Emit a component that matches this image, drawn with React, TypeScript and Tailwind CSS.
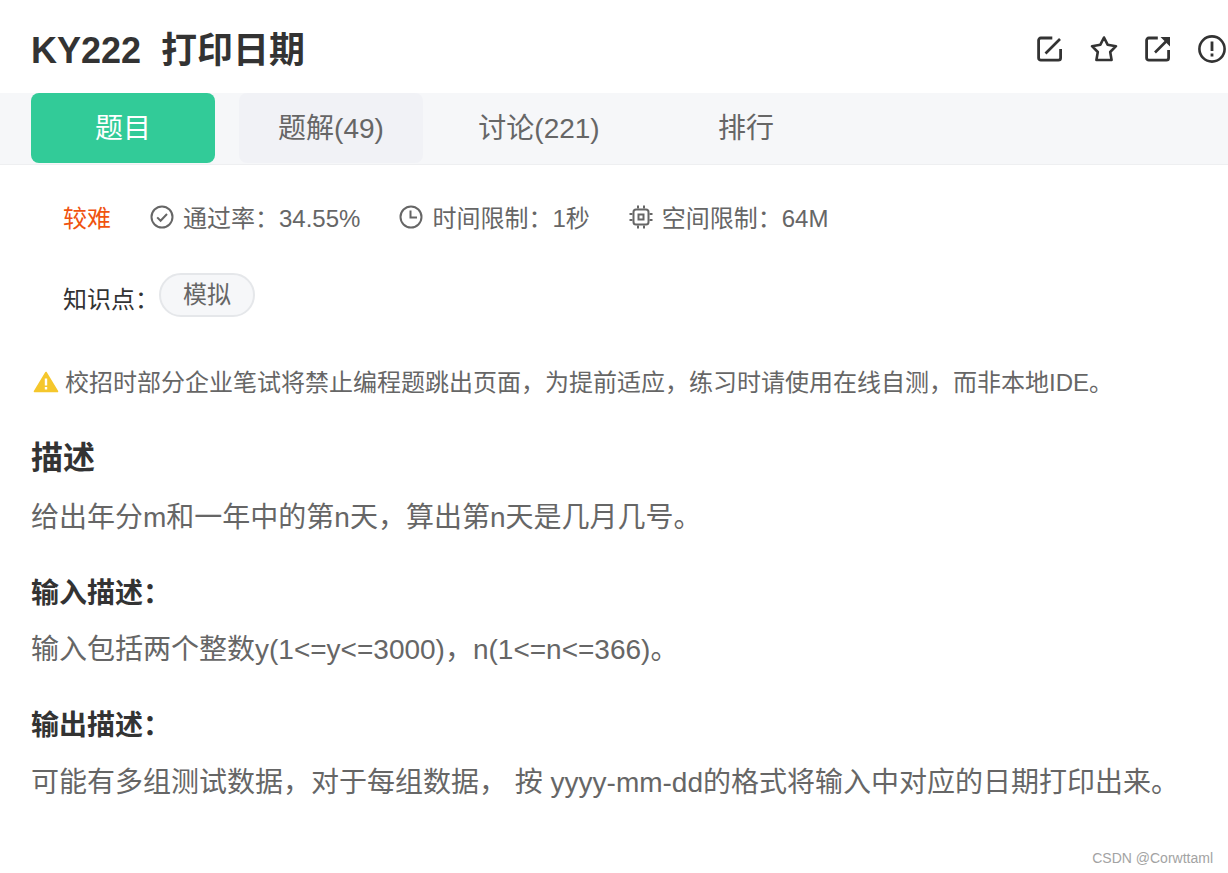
const font = "font-['Liberation_Sans','Noto_Sans_CJK_SC',sans-serif]";

function EditIcon() {
  return (
    <svg width="26" height="26" viewBox="0 0 26 26" fill="none" stroke="#333" strokeWidth="2.8" className="shrink-0">
      <path d="M23.6 13v9a2.2 2.2 0 0 1-2.2 2.2H3.8a2.2 2.2 0 0 1-2.2-2.2V4.2A2.2 2.2 0 0 1 3.8 2h11.5" />
      <path d="M8.5 17.5 23 3" strokeWidth="2.6" />
    </svg>
  );
}

function StarIcon() {
  return (
    <svg width="28" height="28" viewBox="0 0 28 28" fill="none" stroke="#333" strokeWidth="2.6" strokeLinejoin="round" className="shrink-0">
      <path d="M14 2.5 17.6 9.7 26 11.2 20.2 17 21.6 25H6.4L7.8 17 2 11.2 10.4 9.7Z" />
    </svg>
  );
}

function ShareIcon() {
  return (
    <svg width="26" height="26" viewBox="0 0 26 26" fill="none" stroke="#333" strokeWidth="2.8" className="shrink-0">
      <path d="M23.6 14v8a2.2 2.2 0 0 1-2.2 2.2H3.8a2.2 2.2 0 0 1-2.2-2.2V4.2A2.2 2.2 0 0 1 3.8 2h9" />
      <path d="M10 16.5 21 5.5" strokeWidth="2.6" />
      <path d="M15.5 1H25V10.5Z" fill="#333" stroke="none" />
    </svg>
  );
}

function InfoIcon() {
  return (
    <svg width="30" height="30" viewBox="0 0 30 30" fill="none" stroke="#333" strokeWidth="2.6" className="shrink-0">
      <circle cx="15" cy="15" r="12.6" />
      <path d="M15 7.5V17M15 19.5V22.5" strokeWidth="2.8" />
    </svg>
  );
}

function CheckCircle() {
  return (
    <svg width="24" height="24" viewBox="0 0 24 24" fill="none" stroke="#666" strokeWidth="2">
      <circle cx="12" cy="12" r="10.5" />
      <path d="M7.2 12.4 10.6 15.8 17 9" />
    </svg>
  );
}

function ClockIcon() {
  return (
    <svg width="24" height="24" viewBox="0 0 24 24" fill="none" stroke="#666" strokeWidth="2">
      <circle cx="12" cy="12" r="10.5" />
      <path d="M11.5 5.5V12.5H18" />
    </svg>
  );
}

function ChipIcon() {
  return (
    <svg width="24" height="24" viewBox="0 0 24 24" fill="none" stroke="#666" strokeWidth="2">
      <rect x="4.5" y="4.5" width="15" height="15" rx="2.5" />
      <rect x="9.5" y="9.5" width="5" height="5" />
      <path d="M9 0.5v3M15 0.5v3M9 20.5v3M15 20.5v3M0.5 9h3M0.5 15h3M20.5 9h3M20.5 15h3" />
    </svg>
  );
}

function WarnIcon() {
  return (
    <svg width="26" height="24" viewBox="0 0 26 24" className="mb-[3px] shrink-0">
      <path d="M13 2.5 24.5 21.5H1.5Z" fill="#f5c72c" stroke="#f5c72c" strokeWidth="1.6" strokeLinejoin="round" />
      <path d="M13 8.5v7M13 17v2.4" stroke="#fff" strokeWidth="2.4" />
    </svg>
  );
}

export default function App() {
  return (
    <div className={`${font} relative h-[873px] w-[1228px] overflow-hidden bg-white text-[#666]`}>
      <div className="flex h-[93px] items-center justify-between pl-[31px]">
        <h1 className="mt-[8px] text-[36px] leading-none font-bold text-[#333]">KY222&nbsp; 打印日期</h1>
        <div className="mt-[5px] flex w-[191px] shrink-0 items-center">
          <EditIcon />
          <span className="ml-[27px]"><StarIcon /></span>
          <span className="ml-[27px]"><ShareIcon /></span>
          <span className="ml-[26px]"><InfoIcon /></span>
        </div>
      </div>

      <div className="flex h-[72px] border-b border-[#eeeff1] bg-[#f6f7f9] pl-[31px] text-[28px]">
        <div className="flex h-[70px] w-[184px] items-center justify-center rounded-[8px] bg-[#32cb98] pt-[1px] text-white">题目</div>
        <div className="ml-[24px] flex h-[70px] w-[184px] items-center justify-center rounded-[8px] bg-[#f1f2f6] pt-[1px]">题解(49)</div>
        <div className="flex h-[70px] w-[232px] items-center justify-center pt-[1px]">讨论(221)</div>
        <div className="flex h-[70px] w-[182px] items-center justify-center pt-[1px]">排行</div>
      </div>

      <div className="flex h-[54px] items-center pl-[63px] pt-[54px] text-[24px]">
        <span className="text-[#f0530f]">较难</span>
        <span className="mb-[5px] ml-[39px]"><CheckCircle /></span>
        <span className="ml-[9px]">通过率：34.55%</span>
        <span className="mb-[5px] ml-[39px]"><ClockIcon /></span>
        <span className="ml-[9px]">时间限制：1秒</span>
        <span className="mb-[5px] ml-[39px]"><ChipIcon /></span>
        <span className="ml-[9px]">空间限制：64M</span>
      </div>

      <div className="mt-[54px] flex h-[44px] items-start pl-[63px] text-[24px] text-[#333]">
        <span className="mt-[9px]">知识点：</span>
        <span className="flex h-[44px] w-[96px] items-center justify-center rounded-full border-2 border-[#e5e7ea] bg-[#f6f7f9] text-[#666]">模拟</span>
      </div>

      <div className="mt-[48px] flex items-center gap-[6px] pl-[33px] text-[24px]">
        <WarnIcon />
        <span className="whitespace-nowrap">校招时部分企业笔试将禁止编程题跳出页面，为提前适应，练习时请使用在线自测，而非本地IDE。</span>
      </div>

      <div className="pl-[31px]">
        <h2 className="mt-[35px] text-[32px] leading-[44px] font-bold text-[#333]">描述</h2>
        <p className="mt-[18px] text-[28px] leading-[40px]">给出年分m和一年中的第n天，算出第n天是几月几号。</p>
        <h3 className="mt-[36px] text-[28px] leading-[40px] font-bold text-[#333]">输入描述：</h3>
        <p className="mt-[16px] text-[28px] leading-[40px]">输入包括两个整数y(1&lt;=y&lt;=3000)，n(1&lt;=n&lt;=366)。</p>
        <h3 className="mt-[36px] text-[28px] leading-[40px] font-bold text-[#333]">输出描述：</h3>
        <p className="mt-[17px] whitespace-nowrap text-[28px] leading-[40px]">可能有多组测试数据，对于每组数据， 按 yyyy-mm-dd的格式将输入中对应的日期打印出来。</p>
      </div>

      <span className="absolute top-[848px] right-[15px] text-[14px] text-[#a3a3a3]">CSDN @Corwttaml</span>
    </div>
  );
}
